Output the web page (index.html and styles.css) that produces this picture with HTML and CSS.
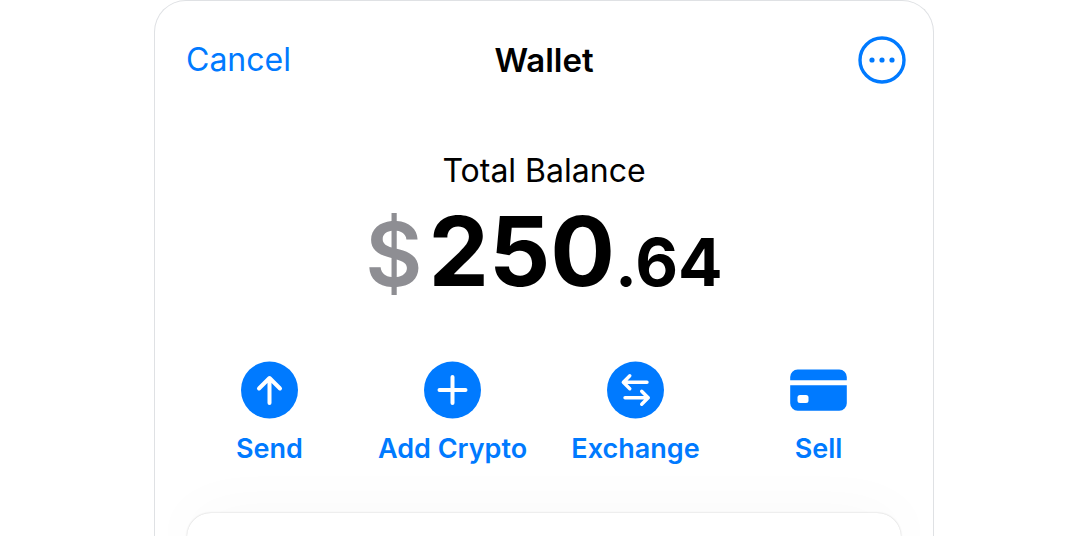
FILE: index.html
```html
<!DOCTYPE html>
<html lang="en">
<head>
	<meta charset="UTF-8">
	<meta name="viewport" content="width=device-width, initial-scale=1">
	<title>Wallet</title>
	<link rel="stylesheet" href="styles.css">
</head>
<body>
	<main class="wallet">
		<header class="top">
			<button type="button" class="cancel">Cancel</button>
			<h1>Wallet</h1>
			<button type="button" class="more" aria-label="More">
				<svg width="48" height="48" viewBox="0 0 48 48">
					<circle cx="24" cy="24" r="22" fill="none" stroke="currentColor" stroke-width="3.4"/>
					<g fill="currentColor">
						<circle cx="14" cy="24" r="2.6"/>
						<circle cx="24" cy="24" r="2.6"/>
						<circle cx="34" cy="24" r="2.6"/>
					</g>
				</svg>
			</button>
		</header>
		<section class="balance">
			<h2>Total Balance</h2>
			<p class="amount"><span class="sign">$</span><span>250</span><span class="cents">.64</span></p>
		</section>
		<nav class="actions">
			<button type="button">
				<svg width="58" height="58" viewBox="0 0 58 58">
					<circle cx="28.5" cy="29" r="28.5" fill="currentColor"/>
					<path d="M28.5 42V17M18 27.500L28.500 17L39 27.500" fill="none" stroke="#fff" stroke-width="4" stroke-linecap="round" stroke-linejoin="round"/>
				</svg>
				<span>Send</span>
			</button>
			<button type="button">
				<svg width="58" height="58" viewBox="0 0 58 58">
					<circle cx="28.5" cy="29" r="28.5" fill="currentColor"/>
					<path d="M28.5 16v26M15.500 29h26" fill="none" stroke="#fff" stroke-width="4" stroke-linecap="round"/>
				</svg>
				<span>Add Crypto</span>
			</button>
			<button type="button">
				<svg width="58" height="58" viewBox="0 0 58 58">
					<circle cx="28.5" cy="29" r="28.5" fill="currentColor"/>
					<path d="M40 21.300H16.700M22.800 14.800L16.300 21.300l6.500 6.500M18 36.800h23.300M34.700 30.300l6.500 6.500l-6.500 6.500" fill="none" stroke="#fff" stroke-width="3.400" stroke-linecap="round" stroke-linejoin="round"/>
				</svg>
				<span>Exchange</span>
			</button>
			<button type="button">
				<svg width="58" height="58" viewBox="0 0 58 58">
					<path d="M.2 19.200V16a7.500 7.500 0 0 1 7.500-7.500h41.600A7.500 7.500 0 0 1 56.800 16v3.200z" fill="currentColor"/>
					<path d="M.2 24.200h56.600v18a7.500 7.500 0 0 1-7.500 7.500H7.700a7.500 7.500 0 0 1-7.500-7.500z" fill="currentColor"/>
					<rect x="7.5" y="34" width="11" height="8" rx="2.500" fill="#fff"/>
				</svg>
				<span>Sell</span>
			</button>
		</nav>
		<section class="sheet" aria-label="Assets"></section>
	</main>
</body>
</html>
```
FILE: styles.css
```css
*{box-sizing: border-box;}
body{margin: 0;background: #fff;color: #000;font-family: Inter, "Liberation Sans", sans-serif;}
button{margin: 0;padding: 0;border: 0;background: none;color: #007aff;font-family: inherit;cursor: pointer;}
h1,h2,p{margin: 0;}
svg{display: block;}

.wallet{
	max-width: 780px; min-height: 100vh;
	margin: 0 auto; overflow: hidden;
	display: flex; flex-direction: column;
	border: 1px solid #dfe1e4; border-bottom: 0;
	border-radius: 32px 32px 0 0;
}

.top{display: grid;grid-template-columns: 1fr auto 1fr;align-items: center;padding: 35px 27px 0;}
.top h1{font-size: 33px;line-height: 48px;font-weight: 600;}
.cancel{justify-self: start;padding: 0 4px;font-size: 32px;line-height: 48px;}
.more{justify-self: end;}

.balance{padding-top: 65px;text-align: center;}
.balance h2{font-size: 32px;line-height: 44px;font-weight: 400;}
.amount{display: flex;justify-content: center;align-items: baseline;font-size: 96px;line-height: 116px;font-weight: 700;}
.sign{margin-right: 6px;color: #8e8e93;font-size: 88px;font-weight: 600;}
.cents{font-size: 66px;}

.actions{display: grid;grid-template-columns: repeat(4, 1fr);padding: 41px 23px 0;}
.actions button{
	display: flex; flex-direction: column;
	align-items: center; gap: 12px;
	font-size: 27px; line-height: 36px;
	font-weight: 600; white-space: nowrap;
}

.sheet{
	flex: 1 0 24px; margin: 46px 32px 0;
	border-radius: 32px 32px 0 0;
	background: #fff;
	box-shadow: 0 0 2px rgba(0,0,0,.22), 0 8px 64px rgba(0,0,0,.06);
}
```
